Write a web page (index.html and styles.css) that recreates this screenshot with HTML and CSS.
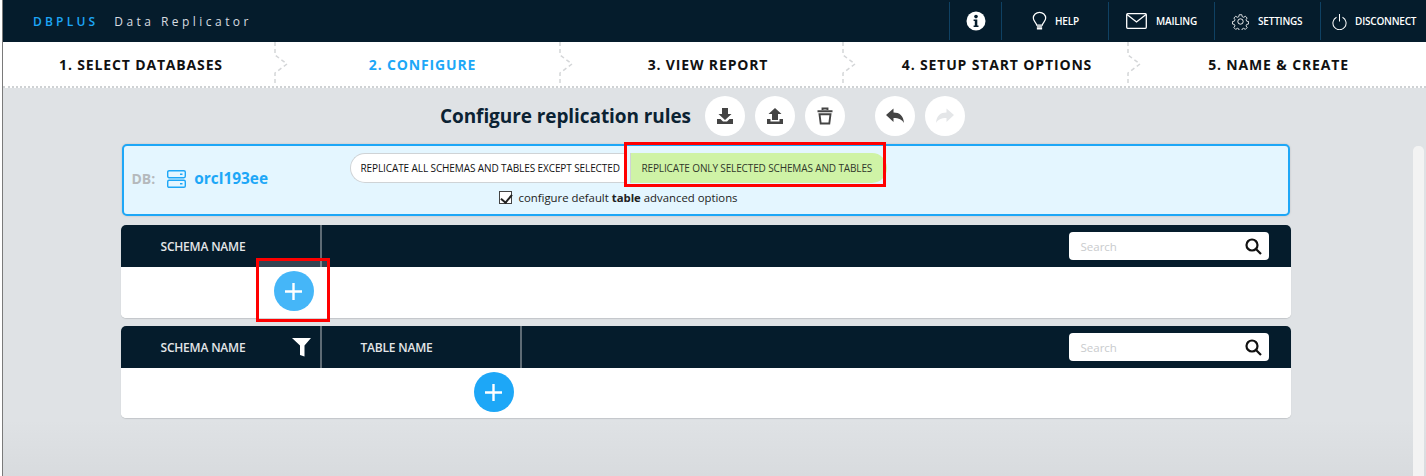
FILE: index.html
```html
<!DOCTYPE html>
<html lang="en">
<head>
<meta charset="utf-8">
<title>DBPLUS Data Replicator</title>
<link rel="stylesheet" href="styles.css">
</head>
<body>
<div class="app">
  <header class="topbar">
    <div class="brand"><span class="brand-name">DBPLUS</span><span class="brand-app">Data Replicator</span></div>
    <nav class="topnav">
      <a class="nav-item nav-info"><svg width="20" height="20" viewBox="0 0 20 20"><circle cx="10" cy="10" r="9.5" fill="#fff"/><circle cx="10" cy="5.6" r="1.8" fill="#051c2c"/><path d="M7.6 8.4h3.7v6h1.2v1.6H7.6v-1.6h1.2V10H7.6z" fill="#051c2c"/></svg></a>
      <a class="nav-item nav-help"><svg width="15" height="20" viewBox="0 0 16 20" fill="none" stroke="#fff" stroke-width="1.3"><path d="M5 14.5c0-2.5-3.6-4-3.6-7.6a6.6 6.2 0 0 1 13.2 0c0 3.6-3.6 5.100-3.600 7.600z"/><path d="M5.200 16.400h5.600M5.200 18.300h5.600" stroke-width="1.500"/></svg><span>HELP</span></a>
      <a class="nav-item nav-mail"><svg width="21" height="16" viewBox="0 0 21 16" fill="none" stroke="#fff" stroke-width="1.300"><rect x=".7" y=".7" width="19.600" height="14.600" rx="1"/><path d="M1 1.500l9.500 7.500L20 1.500"/></svg><span>MAILING</span></a>
      <a class="nav-item nav-settings"><svg width="17" height="17" viewBox="0 0 24 24" fill="none" stroke="#fff" stroke-width="1.300"><circle cx="12" cy="12" r="3.800"/><path d="M10 1.500h4l.6 3 2.300 1 2.600-1.700 2.800 2.800-1.700 2.600 1 2.300 3 .6-.1 3.800-2.900.6-1 2.300 1.700 2.600-2.800 2.800-2.600-1.700-2.300 1-.6 2.900h-4l-.6-2.900-2.300-1-2.600 1.700-2.800-2.800 1.700-2.600-1-2.300-2.900-.6v-3.800l2.900-.6 1-2.300-1.700-2.600 2.800-2.800 2.600 1.700 2.300-1z" transform="translate(1.100 1.100) scale(.91)"/></svg><span>SETTINGS</span></a>
      <a class="nav-item nav-off"><svg width="15" height="17" viewBox="0 0 16 17" fill="none" stroke="#fff" stroke-width="1.100"><path d="M8 .5v8"/><path d="M4.800 4A7 7 0 1 0 11.200 4"/></svg><span>DISCONNECT</span></a>
    </nav>
  </header>

  <ol class="steps">
    <li class="step step-1">1. SELECT DATABASES</li>
    <li class="step step-2 step-active">2. CONFIGURE</li>
    <li class="step step-3">3. VIEW REPORT</li>
    <li class="step step-4">4. SETUP START OPTIONS</li>
    <li class="step step-5">5. NAME &amp; CREATE</li>
  </ol>

  <main class="content">
    <div class="title-row">
      <h1 class="title">Configure replication rules</h1>
      <div class="tool-group">
        <button class="tool"><svg width="18" height="18" viewBox="0 0 18 18" fill="#444"><path d="M6 1h6v6h3.500L9 13 2.500 7H6z"/><path d="M1 12h3.500L7 14.500h4L13.500 12H17v5H1z"/></svg></button>
        <button class="tool"><svg width="18" height="18" viewBox="0 0 18 18" fill="#444"><path d="M9 1l6.500 6H12v6H6V7H2.500z"/><path d="M1 12h3.500v2.500h9V12H17v5H1z"/></svg></button>
        <button class="tool"><svg width="18" height="18" viewBox="0 0 18 18" fill="none" stroke="#444" stroke-width="1.900"><path d="M1.500 4.200h15M6.500 3V1.500h5V3"/><path d="M3.500 7.200h11l-1.200 9.300H4.700z"/></svg></button>
      </div>
      <div class="tool-group tool-group-history">
        <button class="tool"><svg width="20" height="18" viewBox="0 0 20 18" fill="#444"><path d="M8.500 1.500v4c6 0 10 3 10.500 10.500-2-3.500-5-5-10.500-5v4L1 8z"/></svg></button>
        <button class="tool"><svg width="20" height="18" viewBox="0 0 20 18" fill="#e4e6e8"><path d="M11.500 1.500v4c-6 0-10 3-10.500 10.500 2-3.500 5-5 10.500-5v4L19 8z"/></svg></button>
      </div>
    </div>

    <section class="db-card">
      <div class="db-label"><span class="db-prefix">DB:</span>
        <svg class="db-icon" width="19" height="18" viewBox="0 0 19 18" fill="none" stroke="#1da7f7" stroke-width="1.400"><rect x=".7" y=".7" width="17.600" height="7" rx="1.400"/><rect x=".7" y="10.300" width="17.600" height="7" rx="1.400"/><path d="M13 4.200h2.500M13 13.800h2.500"/></svg>
        <span class="db-name">orcl193ee</span></div>
      <div class="db-options">
        <div class="mode-switch">
          <span class="mode">REPLICATE ALL SCHEMAS AND TABLES EXCEPT SELECTED</span>
          <span class="mode mode-on">REPLICATE ONLY SELECTED SCHEMAS AND TABLES</span>
        </div>
        <label class="adv"><input class="adv-check" type="checkbox" checked><span>configure default <b>table</b> advanced options</span></label>
      </div>
    </section>

    <section class="panel">
      <div class="panel-head">
        <div class="col col-schema">SCHEMA NAME</div>
        <div class="search"><span>Search</span><svg width="17" height="17" viewBox="0 0 17 17" fill="none" stroke="#111" stroke-width="2.200"><circle cx="7" cy="7" r="5.500"/><path d="M11 11l5 5"/></svg></div>
      </div>
      <div class="panel-body body-a"><button class="add add-a"><svg width="17" height="17" viewBox="0 0 17 17" stroke="#fff" stroke-width="2.400"><path d="M8.500 0v17M0 8.500h17"/></svg></button></div>
    </section>

    <section class="panel">
      <div class="panel-head">
        <div class="col col-schema">SCHEMA NAME<svg class="funnel" width="19" height="19" viewBox="0 0 19 19" fill="#fff"><path d="M0 0h19l-6.500 7.500V18.500l-4.500-1.500v-9.500z"/></svg></div>
        <div class="col col-table">TABLE NAME</div>
        <div class="search"><span>Search</span><svg width="17" height="17" viewBox="0 0 17 17" fill="none" stroke="#111" stroke-width="2.200"><circle cx="7" cy="7" r="5.500"/><path d="M11 11l5 5"/></svg></div>
      </div>
      <div class="panel-body body-b"><button class="add add-b"><svg width="17" height="17" viewBox="0 0 17 17" stroke="#fff" stroke-width="2.400"><path d="M8.500 0v17M0 8.500h17"/></svg></button></div>
    </section>
  </main>

  <div class="ghost-menu"><span class="ghost-pref">Preferences</span><span class="ghost-about">About</span><span class="ghost-quit">Quit</span></div>
  <div class="scrollbar"></div>
  <div class="mark mark-mode"></div>
  <div class="mark mark-add"></div>
</div>
</body>
</html>
```

FILE: styles.css
```css
* { box-sizing: border-box; }
html, body { margin: 0; height: 100%; overflow: hidden; }
body { font-family: "Open Sans", "Noto Sans", sans-serif; background: #fff; }
.app { position: relative; height: 476px; margin-left: 2px; display: flex; flex-direction: column; border-left: 1px solid #7a7a7a; background: linear-gradient(#dfe2e5 0, #dfe2e5 420px, #d8dbde 476px); }

.topbar { height: 42px; background: #051c2c; display: flex; justify-content: space-between; align-items: center; }
.brand { padding-left: 30px; font-size: 12px; white-space: nowrap; }
.brand-name { color: #1da7f7; font-weight: 600; margin-right: 16px; letter-spacing: 3.2px; }
.brand-app { color: #d8dde0; letter-spacing: 3.45px; }
.topnav { display: flex; height: 38px; align-self: flex-start; margin-top: 2px; }
.nav-item { display: flex; align-items: center; border-left: 1px solid #0f4163; color: #fff; font-size: 10px; font-weight: 600; letter-spacing: -.2px; }
.nav-info { width: 52px; justify-content: center; }
.nav-help { width: 107px; padding-left: 30px; gap: 8px; }
.nav-mail { width: 106px; padding-left: 17px; gap: 9px; }
.nav-settings { width: 106px; padding-left: 17px; gap: 9px; }
.nav-off { width: 106px; padding-left: 11px; gap: 8px; }

.steps { list-style: none; margin: 0; padding: 0; height: 46px; background: #fff; display: grid; grid-template-columns: 285px 285px 283px 285px 1fr; border-bottom: 2px dotted #cfd2d4; }
.step { display: flex; align-items: center; justify-content: center; font-size: 14px; font-weight: 700; letter-spacing: .85px; color: #111; padding-top: 1px; background: no-repeat right top / 14px 44px url("data:image/svg+xml,%3Csvg xmlns='http://www.w3.org/2000/svg' width='14' height='44'%3E%3Cpath d='M1 0v13l12 9-12 9v13' fill='none' stroke='%23d4d6d8' stroke-width='1.500' stroke-dasharray='4 3'/%3E%3C/svg%3E"); }
.step-1 { padding-right: 9px; }
.step-2 { padding-right: 16px; }
.step-3 { padding-right: 13px; }
.step-4 { padding-right: 3px; }
.step-5 { padding-right: 10px; background: none; }
.step-active { color: #1da7f7; }

.content { flex: 1; display: flex; flex-direction: column; align-items: center; padding-right: 18px; }
.title-row { height: 56px; width: 100%; flex: none; display: flex; align-items: center; padding-left: 437px; }
.title { margin: 0; font-size: 19px; font-weight: 700; color: #0b2233; white-space: nowrap; letter-spacing: -.08px; }
.tool-group { display: flex; gap: 10px; margin-left: 14px; }
.tool-group-history { margin-left: 30px; }
.tool { width: 40px; height: 40px; border: 0; padding: 0; border-radius: 50%; background: #fff; display: flex; align-items: center; justify-content: center; }

.db-card { width: 1168px; height: 72px; flex: none; background: #e4f6ff; border: 2px solid #1da7f7; border-radius: 5px; position: relative; box-shadow: 0 0 2px #bbb; }
.db-label { position: absolute; left: 8px; top: 22px; display: flex; align-items: center; }
.db-prefix { font-size: 14px; font-weight: 700; color: #b5b9bc; margin-right: 12px; }
.db-icon { margin-right: 8px; }
.db-name { font-size: 15.4px; font-weight: 700; color: #1da7f7; }
.db-options { display: flex; flex-direction: column; align-items: center; position: absolute; left: 225px; top: 7px; width: 540px; }
.mode-switch { display: flex; height: 30px; width: 538px; }
.mode { display: flex; align-items: center; font-size: 10px; color: #111; letter-spacing: -.1px; white-space: nowrap; background: #fff; border: 1px solid #cfd3d6; border-right: 0; border-radius: 15px 0 0 15px; padding-left: 10px; width: 276px; }
.mode-on { background: #cff3a6; border: 0; border-left: 1px solid #cfd3d6; border-radius: 0 15px 15px 0; width: 257px; margin-left: 4px; padding-left: 11px; color: #30382a; letter-spacing: -.13px; }
.adv { display: flex; align-items: center; font-size: 11.35px; color: #222; margin-top: 7px; white-space: nowrap; }
.adv-check { appearance: none; position: relative; width: 13px; height: 13px; margin: 0 6px 0 0; background: #fff; border: 1px solid #444; }
.adv-check::after { content: ""; position: absolute; left: 3px; top: 0; width: 5px; height: 9px; border: solid #222; border-width: 0 2px 2px 0; transform: rotate(40deg); }

.panel { width: 1170px; flex: none; margin-top: 9px; background: #fff; border-radius: 5px; box-shadow: 0 1px 1px #c3c6c9; overflow: hidden; }
.panel + .panel { margin-top: 8px; }
.panel-head { height: 42px; background: #051c2c; display: flex; position: relative; }
.col { height: 100%; width: 200px; display: flex; align-items: center; font-size: 12px; font-weight: 600; color: #e4e6e8; letter-spacing: -.2px; border-right: 2px solid #5e6b75; position: relative; }
.col-schema { width: 201px; padding-left: 40px; }
.col-table { padding-left: 39px; }
.funnel { position: absolute; right: 9px; top: 12px; }
.search { position: absolute; right: 22px; top: 7px; width: 200px; height: 28px; background: #fff; border-radius: 4px; display: flex; align-items: center; justify-content: space-between; padding: 0 7px 0 12px; font-size: 11.5px; color: #c9cbcd; }
.panel-body { background: #fff; position: relative; }
.body-a { height: 51px; }
.body-b { height: 50px; }
.add { position: absolute; display: flex; align-items: center; justify-content: center; width: 40px; height: 40px; border: 0; border-radius: 50%; padding: 0; background: #1da7f7; }
.add-a { left: 153px; top: 4px; }
.add-b { left: 353px; top: 4px; }

.ghost-menu { position: absolute; left: 1154px; top: 97px; display: flex; flex-direction: column; align-items: flex-start; font-size: 15px; line-height: 20px; color: rgba(0, 0, 0, .025); }
.ghost-about { margin-top: 48px; }
.ghost-quit { margin-top: 7px; }
.scrollbar { position: absolute; left: 1410px; top: 146px; bottom: 0; width: 11px; background: #f3f3f3; border-radius: 5px 5px 0 0; }
.mark { position: absolute; border: 3px solid #f00; }
.mark-mode { left: 621px; top: 142px; width: 262px; height: 45px; }
.mark-add { left: 253px; top: 258px; width: 74px; height: 64px; background: rgba(255, 255, 255, .18); }
```
